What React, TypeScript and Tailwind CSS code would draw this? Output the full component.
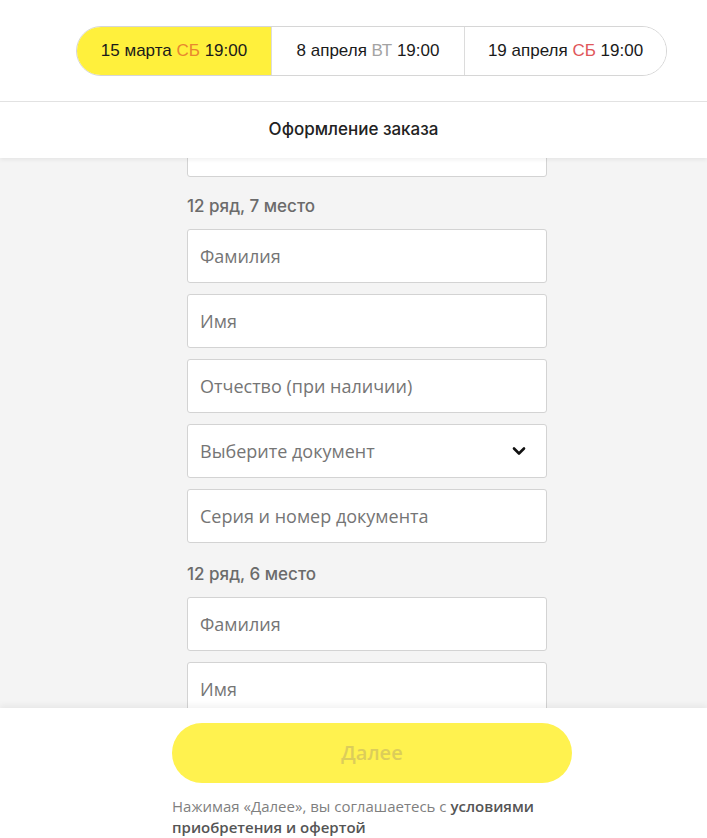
import React from "react";

const Input = ({ placeholder, select }: { placeholder: string; select?: boolean }) => (
  <div className="h-[54px] w-[360px] shrink-0 bg-white border border-[#d3d3d3] rounded-[3px] flex items-center justify-between pl-[12px] pr-[20px]">
    <span className="text-[18px] text-[#757575]">{placeholder}</span>
    {select && (
      <svg width="14" height="10" viewBox="0 0 14 10" fill="none">
        <path d="M2 2.5 L7 7.5 L12 2.5" stroke="#111" strokeWidth="2.6" strokeLinecap="round" strokeLinejoin="round" />
      </svg>
    )}
  </div>
);

const labelCls = "mb-[11px] h-[24px] leading-[24px] text-[17px] font-medium text-[#6b6b6b] font-['Inter',sans-serif]";

export default function App() {
  return (
    <div
      className="w-[707px] h-[838px] overflow-hidden flex flex-col bg-[#f4f4f4]"
      style={{ fontFamily: '"Open Sans", "Noto Sans", sans-serif' }}
    >
      <div className="h-[102px] shrink-0 bg-white flex items-center pl-[76px] border-b border-[#e3e3e3]">
        <div
          className="w-[591px] h-[50px] rounded-full border border-[#d6d6d6] flex overflow-hidden text-[17px] text-[#1a1a1a]"
          style={{ fontFamily: '"Liberation Sans", Arial, sans-serif' }}
        >
          <div className="w-[194px] bg-[#fff03c] flex items-center justify-center">
            15 марта&nbsp;<span className="text-[#e8872f]">СБ</span>&nbsp;19:00
          </div>
          <div className="w-[193px] bg-white flex items-center justify-center border-l border-[#dcdcdc]">
            8 апреля&nbsp;<span className="text-[#a3a3a3]">ВТ</span>&nbsp;19:00
          </div>
          <div className="flex-1 bg-white flex items-center justify-center border-l border-[#dcdcdc]">
            19 апреля&nbsp;<span className="text-[#e0575a]">СБ</span>&nbsp;19:00
          </div>
        </div>
      </div>
      <div className="relative z-10 h-[56px] shrink-0 bg-white flex items-center justify-center text-[17px] font-medium text-[#222] font-['Inter',sans-serif] shadow-[0_2px_4px_rgba(0,0,0,0.06)]">
        Оформление заказа
      </div>
      <div className="flex-1 min-h-0 overflow-hidden flex flex-col pl-[187px]">
        <div className="w-[360px] flex flex-col -mt-[35px]">
          <Input placeholder="" />
        </div>
        <div className="w-[360px] flex flex-col">
          <div className={"mt-[17px] " + labelCls}>12 ряд, 7 место</div>
          <div className="flex flex-col gap-[11px]">
            <Input placeholder="Фамилия" />
            <Input placeholder="Имя" />
            <Input placeholder="Отчество (при наличии)" />
            <Input placeholder="Выберите документ" select />
            <Input placeholder="Серия и номер документа" />
          </div>
          <div className={"mt-[19px] " + labelCls}>12 ряд, 6 место</div>
          <div className="flex flex-col gap-[11px]">
            <Input placeholder="Фамилия" />
            <Input placeholder="Имя" />
          </div>
        </div>
      </div>
      <div className="relative z-10 h-[130px] shrink-0 bg-white flex flex-col pl-[172px] shadow-[0_-3px_6px_rgba(0,0,0,0.05)]">
        <div className="w-[400px] mt-[15px] h-[60px] rounded-full bg-[#fff24f] flex items-center justify-center text-[20px] font-semibold text-[#dccd5a]">
          Далее
        </div>
        <div className="w-[400px] mt-[13px] text-[15px] leading-[21px] text-[#7f7f7f]">
          Нажимая «Далее», вы соглашаетесь с{" "}
          <span className="text-[#555] font-semibold">условиями приобретения и офертой</span>
        </div>
      </div>
    </div>
  );
}
